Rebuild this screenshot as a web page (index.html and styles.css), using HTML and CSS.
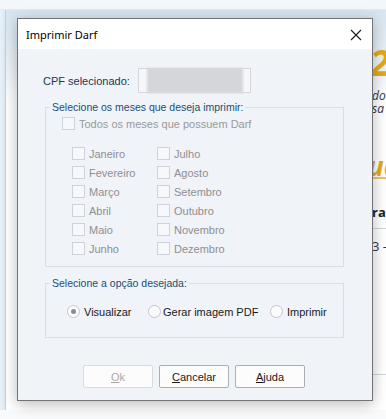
FILE: index.html
```html
<!DOCTYPE html>
<html lang="pt-BR">
<head>
<meta charset="utf-8">
<title>Imprimir Darf</title>
<link rel="stylesheet" href="styles.css">
</head>
<body>
<div class="desk">
  <div class="topbar"></div>
  <div class="main">
    <div class="rail"></div>
    <div class="content">
      <div class="hero"><span class="big">2</span></div>
      <div class="intro"><span>do</span><span>sa</span></div>
      <div class="sub">ud</div>
      <div class="thead">ra</div>
      <div class="trow">3 -</div>
    </div>
  </div>
  <div class="foot"></div>
</div>

<div class="dialog">
  <div class="titlebar">
    <span class="title">Imprimir Darf</span>
    <svg class="close" width="12" height="12" viewBox="0 0 12 12"><path d="M1 1 L11 11 M11 1 L1 11" stroke="#1a1a1a" stroke-width="1.1" fill="none"/></svg>
  </div>
  <div class="body">
    <div class="cpf">
      <span class="cpf-label">CPF selecionado:</span>
      <span class="cpf-box"><span class="blur"></span></span>
    </div>

    <fieldset class="group months">
      <legend>Selecione os meses que deseja imprimir:</legend>
      <label class="check all"><span class="box"></span>Todos os meses que possuem Darf</label>
      <div class="month-grid">
        <label class="check"><span class="box"></span>Janeiro</label>
        <label class="check"><span class="box"></span>Julho</label>
        <label class="check"><span class="box"></span>Fevereiro</label>
        <label class="check"><span class="box"></span>Agosto</label>
        <label class="check"><span class="box"></span>Março</label>
        <label class="check"><span class="box"></span>Setembro</label>
        <label class="check"><span class="box"></span>Abril</label>
        <label class="check"><span class="box"></span>Outubro</label>
        <label class="check"><span class="box"></span>Maio</label>
        <label class="check"><span class="box"></span>Novembro</label>
        <label class="check"><span class="box"></span>Junho</label>
        <label class="check"><span class="box"></span>Dezembro</label>
      </div>
    </fieldset>

    <fieldset class="group options">
      <legend>Selecione a opção desejada:</legend>
      <div class="radios">
        <label class="radio r1"><span class="dot on"></span>Visualizar</label>
        <label class="radio r2"><span class="dot"></span>Gerar imagem PDF</label>
        <label class="radio r3"><span class="dot"></span>Imprimir</label>
      </div>
    </fieldset>

    <div class="buttons">
      <button class="btn disabled"><u>O</u>k</button>
      <button class="btn"><u>C</u>ancelar</button>
      <button class="btn"><u>A</u>juda</button>
    </div>
  </div>
</div>
</body>
</html>
```

FILE: styles.css
```css
* { box-sizing: border-box; }
html, body {
  margin: 0;
  padding: 0;
  width: 386px;
  height: 419px;
  overflow: hidden;
  background: #f7f9fb;
  font-family: "Liberation Sans", Arial, sans-serif;
  font-size: 11px;
}

.desk {
  display: flex;
  flex-direction: column;
  height: 419px;
}
.topbar {
  height: 10px;
  background: #f4f7fa;
  border-bottom: 1px solid #e3ebf2;
}
.main {
  display: flex;
  height: 400px;
}
.rail {
  width: 6px;
  background: linear-gradient(90deg, #eaf1f8, #dde9f4);
  border-right: 1px solid #b9d4ec;
}
.content {
  flex: 1;
  padding-left: 366px;
  background: linear-gradient(180deg, #d6e5f1 0px, #eef3f8 60px, #ffffff 90px);
  overflow: hidden;
  white-space: nowrap;
  font-family: "Open Sans", sans-serif;
}
.hero {
  height: 70px;
  padding-top: 36px;
}
.big {
  font-size: 36px;
  font-weight: 700;
  font-style: italic;
  color: #e1ab17;
  line-height: 34px;
  margin-left: -2px;
}
.intro {
  display: flex;
  flex-direction: column;
  margin-top: 9px;
  font-style: italic;
  font-size: 12px;
  line-height: 13px;
  color: #333;
}
.sub {
  margin-top: 41px;
  font-size: 26px;
  font-style: italic;
  font-weight: 700;
  color: #e1ab17;
  line-height: 20px;
  border-bottom: 2px solid #e8c46a;
  padding-bottom: 1px;
  margin-left: -4px;
}
.thead {
  margin-top: 26px;
  font-weight: 700;
  font-size: 13px;
  line-height: 15px;
  color: #222;
  padding-bottom: 8px;
  border-bottom: 1px solid #cfd6dd;
}
.trow {
  margin-top: 10px;
  font-size: 13px;
  line-height: 15px;
  color: #333;
  padding-bottom: 120px;
  border-bottom: 1px solid #cfd6dd;
}
.foot { flex: 1; background: #f9fafb; }

/* dialog */
.dialog {
  position: absolute;
  left: 17px;
  top: 18px;
  width: 356px;
  height: 383px;
  border: 1px solid #737373;
  background: #f0f3f8;
  box-shadow: 0 3px 14px rgba(0, 0, 0, 0.28);
  display: flex;
  flex-direction: column;
}
.titlebar {
  height: 30px;
  background: #ffffff;
  display: flex;
  align-items: center;
  justify-content: space-between;
  padding: 0 10px 0 8px;
}
.title {
  font-family: "Noto Sans", "Open Sans", sans-serif;
  font-size: 11px;
  color: #000;
  margin-top: 1px;
}
.close { margin-top: 1px; }

.body {
  flex: 1;
  padding: 19px 0 0 27px;
  display: flex;
  flex-direction: column;
}
.cpf {
  display: flex;
  align-items: center;
  height: 25px;
}
.cpf-label {
  color: #1d3653;
  margin-left: -2px;
  width: 95px;
}
.cpf-box {
  width: 113px;
  height: 25px;
  border: 1px solid #d4d8de;
  background: #f5f7fa;
  display: flex;
  align-items: center;
  justify-content: center;
}
.blur {
  width: 96px;
  height: 25px;
  background: #d4d6d9;
  filter: blur(1px);
}

.group {
  margin: 0;
  padding: 0;
  width: 299px;
  border: 1px solid #d9dee5;
  min-inline-size: 0;
}
.group legend {
  margin-left: 4px;
  padding: 0 2px;
  color: #1c4e73;
  font-size: 10.5px;
  line-height: 14px;
}
.months {
  margin-top: 7px;
  height: 167px;
}
.check {
  display: flex;
  align-items: center;
  color: #8f8f8f;
  height: 19px;
}
.box {
  width: 13px;
  height: 13px;
  border: 1px solid #cfd3d9;
  background: #f6f8fb;
  margin-right: 4px;
}
.all {
  margin-left: 16px;
  color: #9a9a9a;
}
.month-grid {
  display: grid;
  grid-template-columns: 85px 85px;
  margin-left: 26px;
  margin-top: 11px;
}

.options {
  margin-top: 9px;
  height: 62px;
}
.radios {
  display: flex;
  align-items: center;
  padding-left: 21px;
  margin-top: 15px;
}
.radio {
  display: flex;
  align-items: center;
  color: #1a1a1a;
}
.r1 { width: 81px; }
.r2 { width: 122px; }
.r2 .dot { margin-right: 2px; }
.dot {
  width: 13px;
  height: 13px;
  border-radius: 50%;
  border: 1px solid #c3c7cc;
  background: #fbfbfc;
  margin-right: 4px;
  display: flex;
  align-items: center;
  justify-content: center;
}
.dot.on::after {
  content: "";
  width: 5px;
  height: 5px;
  border-radius: 50%;
  background: #8a8d91;
}

.buttons {
  display: flex;
  gap: 6px;
  margin-top: 27px;
  margin-left: 38px;
}
.btn {
  width: 70px;
  height: 23px;
  border: 1px solid #acaeb2;
  border-radius: 2px;
  background: #fcfcfd;
  font-family: "Liberation Sans", Arial, sans-serif;
  font-size: 11px;
  color: #1a1a1a;
  padding: 0;
}
.btn.disabled {
  border-color: #d8dbdf;
  color: #a8a8a8;
}
```
